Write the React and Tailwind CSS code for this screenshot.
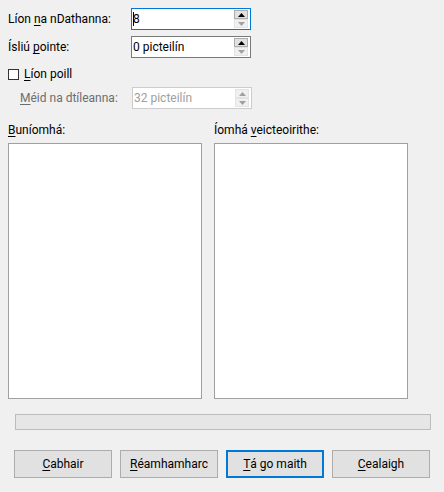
import React from "react";

const U = ({ children }) => <span className="underline underline-offset-2">{children}</span>;

const Spin = ({ disabled }) => (
  <div className="flex flex-col gap-0 pr-[2px]">
    <div
      className={`w-[14px] h-[9px] flex items-center justify-center border ${
        disabled ? "border-[#e3e3e3] bg-[#f0f0f0]" : "border-[#adadad] bg-[#e1e1e1]"
      }`}
    >
      <svg width="7" height="4" viewBox="0 0 7 4">
        <path d="M0 4 L3.5 0 L7 4 Z" fill={disabled ? "#a0a0a0" : "#000"} />
      </svg>
    </div>
    <div className="w-[14px] h-[9px] flex items-center justify-center border border-[#e3e3e3] bg-[#f0f0f0]">
      <svg width="7" height="4" viewBox="0 0 7 4">
        <path d="M0 0 L3.5 4 L7 0 Z" fill="#a0a0a0" />
      </svg>
    </div>
  </div>
);

const SpinField = ({ value, focused, disabled, cursor }) => (
  <div
    className={`w-[120px] h-[22px] flex items-center justify-between bg-white border ${
      focused ? "border-[#0078d7]" : disabled ? "border-[#cccccc]" : "border-[#7a7a7a]"
    }`}
  >
    <span className={`pl-[1px] ${disabled ? "text-[#a0a0a0]" : "text-black"} flex items-center`}>
      {cursor && <span className="inline-block w-[1px] h-[14px] bg-black -mr-[1px]" />}
      {value}
    </span>
    <Spin disabled={disabled} />
  </div>
);

const Button = ({ children, primary }) => (
  <button
    className={`w-[98px] h-[28px] bg-[#e1e1e1] flex items-center justify-center ${
      primary ? "border-2 border-[#0078d7]" : "border border-[#adadad]"
    }`}
  >
    {children}
  </button>
);

export default function App() {
  return (
    <div
      className="w-[444px] h-[492px] bg-[#f0f0f0] text-[12px] text-black leading-none"
      style={{ fontFamily: 'Roboto, "Noto Sans", sans-serif' }}
    >
      <div className="pt-[8px] pl-[8px] flex flex-col">
        <div className="flex items-center h-[22px]">
          <span className="w-[123px]">
            Líon <U>n</U>a nDathanna:
          </span>
          <SpinField value="8" focused cursor />
        </div>
        <div className="flex items-center h-[22px] mt-[6px]">
          <span className="w-[123px]">
            Ísliú <U>p</U>ointe:
          </span>
          <SpinField value="0 picteilín" />
        </div>
        <div className="flex items-center h-[14px] mt-[9px]">
          <div className="w-[11px] h-[11px] bg-white border border-[#333333]" />
          <span className="ml-[5px]">
            <U>L</U>íon poill
          </span>
        </div>
        <div className="flex items-center h-[22px] mt-[6px] pl-[12px]">
          <span className="w-[112px] text-[#6d6d6d]">
            <U>M</U>éid na dtíleanna:
          </span>
          <SpinField value="32 picteilín" disabled />
        </div>
      </div>

      <div className="flex pl-[8px] gap-[12px] mt-[15px]">
        <div className="flex flex-col">
          <span className="h-[19px]">
            <U>B</U>uníomhá:
          </span>
          <div className="w-[194px] h-[256px] bg-white border border-[#a0a0a0]" />
        </div>
        <div className="flex flex-col">
          <span className="h-[19px]">
            Íomhá <U>v</U>eicteoirithe:
          </span>
          <div className="w-[194px] h-[256px] bg-white border border-[#a0a0a0]" />
        </div>
      </div>

      <div className="pl-[15px] mt-[15px]">
        <div className="w-[416px] h-[16px] bg-[#e6e6e6] border border-[#bcbcbc]" />
      </div>

      <div className="flex pl-[14px] gap-[8px] mt-[20px]">
        <Button>
          <U>C</U>abhair
        </Button>
        <Button>
          <U>R</U>éamhamharc
        </Button>
        <Button primary>
          <U>T</U>á go maith
        </Button>
        <Button>
          <U>C</U>ealaigh
        </Button>
      </div>
    </div>
  );
}
